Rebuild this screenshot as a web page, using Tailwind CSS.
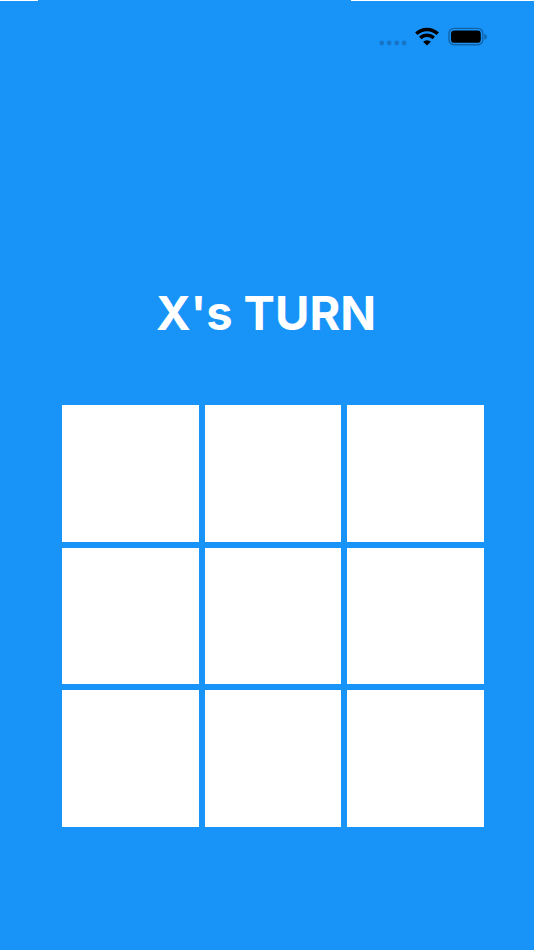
<!DOCTYPE html>
<html lang="en">
<head>
    <meta charset="UTF-8">
    <meta name="viewport" content="width=device-width, initial-scale=1.0">
    <title>Tic Tac Toe</title>
    <script src="https://cdn.jsdelivr.net/npm/@tailwindcss/browser@4"></script>
</head>
<body class="min-h-screen bg-[#1894f9] font-['Inter',sans-serif]">

<!-- Screen edge -->
<div class="flex h-px justify-between">
    <div class="w-[38px] bg-white"></div>
    <div class="w-[183px] bg-white"></div>
</div>

<!-- Status bar -->
<header class="flex h-[72px] items-center justify-end gap-2 pr-[47px]">
    <svg class="h-5 w-7" viewBox="0 0 28 20" fill="#1775c8" aria-hidden="true">
        <circle cx="2.8" cy="16" r="2.4"/>
        <circle cx="10.2" cy="16" r="2.4"/>
        <circle cx="17.7" cy="16" r="2.4"/>
        <circle cx="25.1" cy="16" r="2.4"/>
    </svg>
    <svg class="h-5 w-6" viewBox="0 0 24 20" fill="none" stroke="#000" stroke-width="3.5" aria-hidden="true">
        <path d="M1.3 6.8a15.3 15.3 0 0 1 21.4 0"/>
        <path d="M5.3 11a9.6 9.6 0 0 1 13.4 0"/>
        <path d="M12 18.6 8.1 14.8a5.4 5.4 0 0 1 7.8 0Z" fill="#000" stroke="none"/>
    </svg>
    <svg class="h-5 w-10" viewBox="0 0 40 20" aria-hidden="true">
        <rect x="2" y="1.4" width="33.8" height="16.4" rx="5" fill="none" stroke="#1263a8" stroke-width="1.4"/>
        <rect x="4" y="3.6" width="29.8" height="12.2" rx="3.4" fill="#000"/>
        <path d="M37.4 7c1.6.4 2.4 1.5 2.4 2.8s-.8 2.4-2.4 2.8Z" fill="#1263a8"/>
    </svg>
</header>

<main class="pt-[205px] pr-[50px] pb-10 pl-[62px]">
    <h1 id="turn" class="mr-3.5 text-center text-[47px] leading-[70px] font-bold whitespace-nowrap text-white">X's TURN</h1>

    <div id="board" class="mt-[57px] grid grid-cols-3 gap-1.5">
        <button type="button" aria-label="Cell 1" class="aspect-square bg-white text-7xl font-bold text-[#1894f9]"></button>
        <button type="button" aria-label="Cell 2" class="aspect-square bg-white text-7xl font-bold text-[#1894f9]"></button>
        <button type="button" aria-label="Cell 3" class="aspect-square bg-white text-7xl font-bold text-[#1894f9]"></button>
        <button type="button" aria-label="Cell 4" class="aspect-square bg-white text-7xl font-bold text-[#1894f9]"></button>
        <button type="button" aria-label="Cell 5" class="aspect-square bg-white text-7xl font-bold text-[#1894f9]"></button>
        <button type="button" aria-label="Cell 6" class="aspect-square bg-white text-7xl font-bold text-[#1894f9]"></button>
        <button type="button" aria-label="Cell 7" class="aspect-square bg-white text-7xl font-bold text-[#1894f9]"></button>
        <button type="button" aria-label="Cell 8" class="aspect-square bg-white text-7xl font-bold text-[#1894f9]"></button>
        <button type="button" aria-label="Cell 9" class="aspect-square bg-white text-7xl font-bold text-[#1894f9]"></button>
    </div>
</main>

<script>
    let player = "X";

    const turnElement = document.getElementById("turn");
    const cells = document.querySelectorAll("#board button");

    cells.forEach((cell) => {
        cell.addEventListener("click", () => {
            if (cell.textContent !== "") return;
            cell.textContent = player;
            player = player === "X" ? "O" : "X";
            turnElement.textContent = `${player}'s TURN`;
        });
    });
</script>

</body>
</html>
